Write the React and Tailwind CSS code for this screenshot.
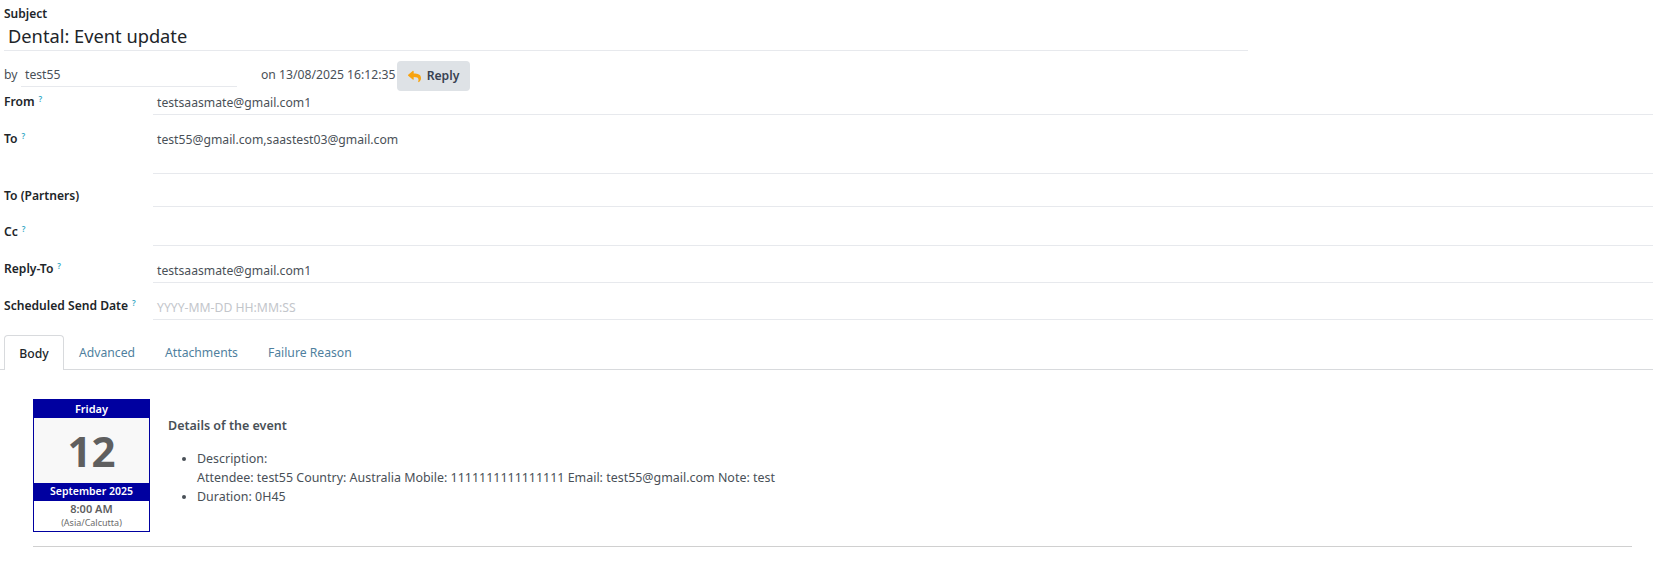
import { FaReply } from "react-icons/fa";

function Label({ text, help = true }) {
    return (
        <div className="text-[12.1px] leading-[18px] font-semibold text-[#212529]">
            {text}
            {help && <sup className="ml-1 text-[8px] font-semibold text-[#33a7c4]">?</sup>}
        </div>
    );
}

function Row({ label, help, value, placeholder, height, labelClass, valueClass }) {
    return (
        <div className={`grid grid-cols-[153px_1fr] ${height}`}>
            <div className={`pl-1 ${labelClass}`}>
                <Label text={label} help={help} />
            </div>
            <div className={`border-b border-[#e7e9ed] pl-[4px] text-[12.2px] leading-[18px] ${valueClass} ${placeholder ? "text-[#c3c6cb]" : "text-[#495057]"}`}>
                {value || placeholder}
            </div>
        </div>
    );
}

export default function App() {
    const tabs = ["Advanced", "Attachments", "Failure Reason"];

    return (
        <div className="h-[565px] overflow-hidden bg-white font-['Noto_Sans',sans-serif] text-[12.2px] text-[#495057]">
            {/* Subject */}
            <div className="w-[1248px] pl-1 pt-[5px]">
                <div className="text-[12px] leading-[18px] font-semibold text-[#212529]">Subject</div>
                <div className="h-[28px] border-b border-[#e7e9ed] pl-1 text-[18.25px] leading-[26px] text-[#212529]">Dental: Event update</div>
            </div>

            {/* By line */}
            <div className="flex h-[41px] items-start pt-[10px] pl-1">
                <span className="mt-[5px] w-[17px] leading-[18px]">by</span>
                <span className="h-[26px] w-[216px] border-b border-[#e7e9ed] pl-[4px] pt-[5px] leading-[18px]">test55</span>
                <span className="ml-[24px] mt-[5px] w-[136px] whitespace-nowrap leading-[18px]">on 13/08/2025 16:12:35</span>
                <button className="flex h-[30px] w-[73px] items-center justify-center gap-[6px] rounded-[4px] bg-[#dee2e6] pt-[1px] text-[12.2px] font-semibold text-[#374151]">
                    <FaReply className="h-[13px] w-[13px] text-[#f8a30f]" />
                    Reply
                </button>
            </div>

            {/* Fields */}
            <Row label="From" value="testsaasmate@gmail.com1" height="h-[23px]" labelClass="pt-[1px]" valueClass="pt-[2px]" />
            <Row label="To" value="test55@gmail.com,saastest03@gmail.com" height="h-[59px]" labelClass="pt-[15px]" valueClass="pt-[16px]" />
            <Row label="To (Partners)" help={false} height="h-[33px]" labelClass="pt-[13px]" valueClass="" />
            <Row label="Cc" height="h-[39px]" labelClass="pt-[16px]" valueClass="" />
            <Row label="Reply-To" value="testsaasmate@gmail.com1" height="h-[37px]" labelClass="pt-[14px]" valueClass="pt-[16px]" />
            <Row label="Scheduled Send Date" placeholder="YYYY-MM-DD HH:MM:SS" height="h-[37px]" labelClass="pt-[14px]" valueClass="pt-[16px]" />

            {/* Tabs */}
            <div className="mt-[15px] flex h-[35px] border-b border-[#d8dadd] pl-1">
                <div className="-mb-px h-[35px] w-[60px] rounded-t-[4px] border border-b-0 border-[#d8dadd] bg-white pt-[8px] text-center leading-5 font-medium text-[#212529]">Body</div>
                <div className="flex">
                    {tabs.map((tab) => (
                        <div key={tab} className="px-[15px] pt-[8px] leading-5 text-[#4f7f9e]">{tab}</div>
                    ))}
                </div>
            </div>

            {/* Body */}
            <div className="pl-[33px] pr-[21px] pt-[29px]">
                <div className="flex items-start">
                    <div className="h-[133px] w-[117px] shrink-0 border border-[#0000a0] text-center">
                        <div className="h-[18px] bg-[#0000a0] text-[11px] leading-[17px] font-semibold text-white">Friday</div>
                        <div className="h-[65px] bg-[#f8f8f8] text-[42px] leading-[65px] font-bold text-[#5f5f5f]">12</div>
                        <div className="h-[18px] bg-[#0000a0] text-[10.5px] leading-[17px] font-semibold text-white">September 2025</div>
                        <div className="pt-[1px] text-[11px] leading-[14px] font-semibold text-[#5f5f5f]">8:00 AM</div>
                        <div className="text-[9px] leading-[14px] text-[#6b6b6b]">(Asia/Calcutta)</div>
                    </div>
                    <div className="ml-[18px] pt-[17px] text-[12.45px]">
                        <div className="text-[12.5px] leading-5 font-semibold">Details of the event</div>
                        <ul className="mt-[13px] list-disc pl-[29px] leading-[19px]">
                            <li>
                                Description:
                                <br />
                                Attendee: test55 Country: Australia Mobile: 1111111111111111 Email: test55@gmail.com Note: test
                            </li>
                            <li>Duration: 0H45</li>
                        </ul>
                    </div>
                </div>
                <div className="mt-[14px] border-t border-[#d0d0d0]" />
            </div>
        </div>
    );
}
